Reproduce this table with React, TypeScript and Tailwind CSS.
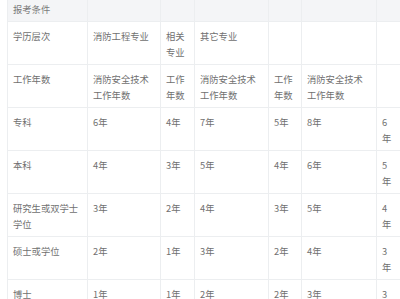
import React from "react";

const rows: string[][] = [
  ["专科", "6年", "4年", "7年", "5年", "8年", "6年"],
  ["本科", "4年", "3年", "5年", "4年", "6年", "5年"],
  ["研究生或双学士学位", "3年", "2年", "4年", "3年", "5年", "4年"],
  ["硕士或学位", "2年", "1年", "3年", "2年", "4年", "3年"],
  ["博士", "1年", "1年", "2年", "2年", "3年", "3年"],
];

const cell =
  "border border-[#eceef0] align-top pl-[5px] pr-[6px] pt-[6px] pb-[4px] break-all";

export default function App() {
  return (
    <div
      className="w-[400px] h-[299px] overflow-hidden bg-white pl-[7px]"
      style={{ fontFamily: '"Noto Sans CJK SC", "Noto Sans", sans-serif' }}
    >
      <table className="-mt-[6px] table-fixed border-collapse w-[393px] text-[9.3px] leading-[16px] text-[#707070]">
        <colgroup>
          <col className="w-[80px]" />
          <col className="w-[73px]" />
          <col className="w-[34px]" />
          <col className="w-[74px]" />
          <col className="w-[33px]" />
          <col className="w-[75px]" />
          <col className="w-[24px]" />
        </colgroup>
        <tbody>
          <tr className="h-[27px] bg-[#f4f5f7] text-[#7a7a7a]">
            <td className={cell}>报考条件</td>
            <td className={cell}></td>
            <td className={cell}></td>
            <td className={cell}></td>
            <td className={cell}></td>
            <td className={cell}></td>
            <td className={cell}></td>
          </tr>
          <tr className="h-[43px]">
            <td className={cell}>学历层次</td>
            <td className={cell}>消防工程专业</td>
            <td className={cell}>相关专业</td>
            <td className={cell}>其它专业</td>
            <td className={cell}></td>
            <td className={cell}></td>
            <td className={cell}></td>
          </tr>
          <tr className="h-[43px]">
            <td className={cell}>工作年数</td>
            <td className={cell}>消防安全技术工作年数</td>
            <td className={cell}>工作年数</td>
            <td className={cell}>消防安全技术工作年数</td>
            <td className={cell}>工作年数</td>
            <td className={cell}>消防安全技术工作年数</td>
            <td className={cell}></td>
          </tr>
          {rows.map((r, i) => (
            <tr key={i} className="h-[43px]">
              {r.map((c, j) => (
                <td key={j} className={cell}>
                  {c}
                </td>
              ))}
            </tr>
          ))}
        </tbody>
      </table>
    </div>
  );
}
